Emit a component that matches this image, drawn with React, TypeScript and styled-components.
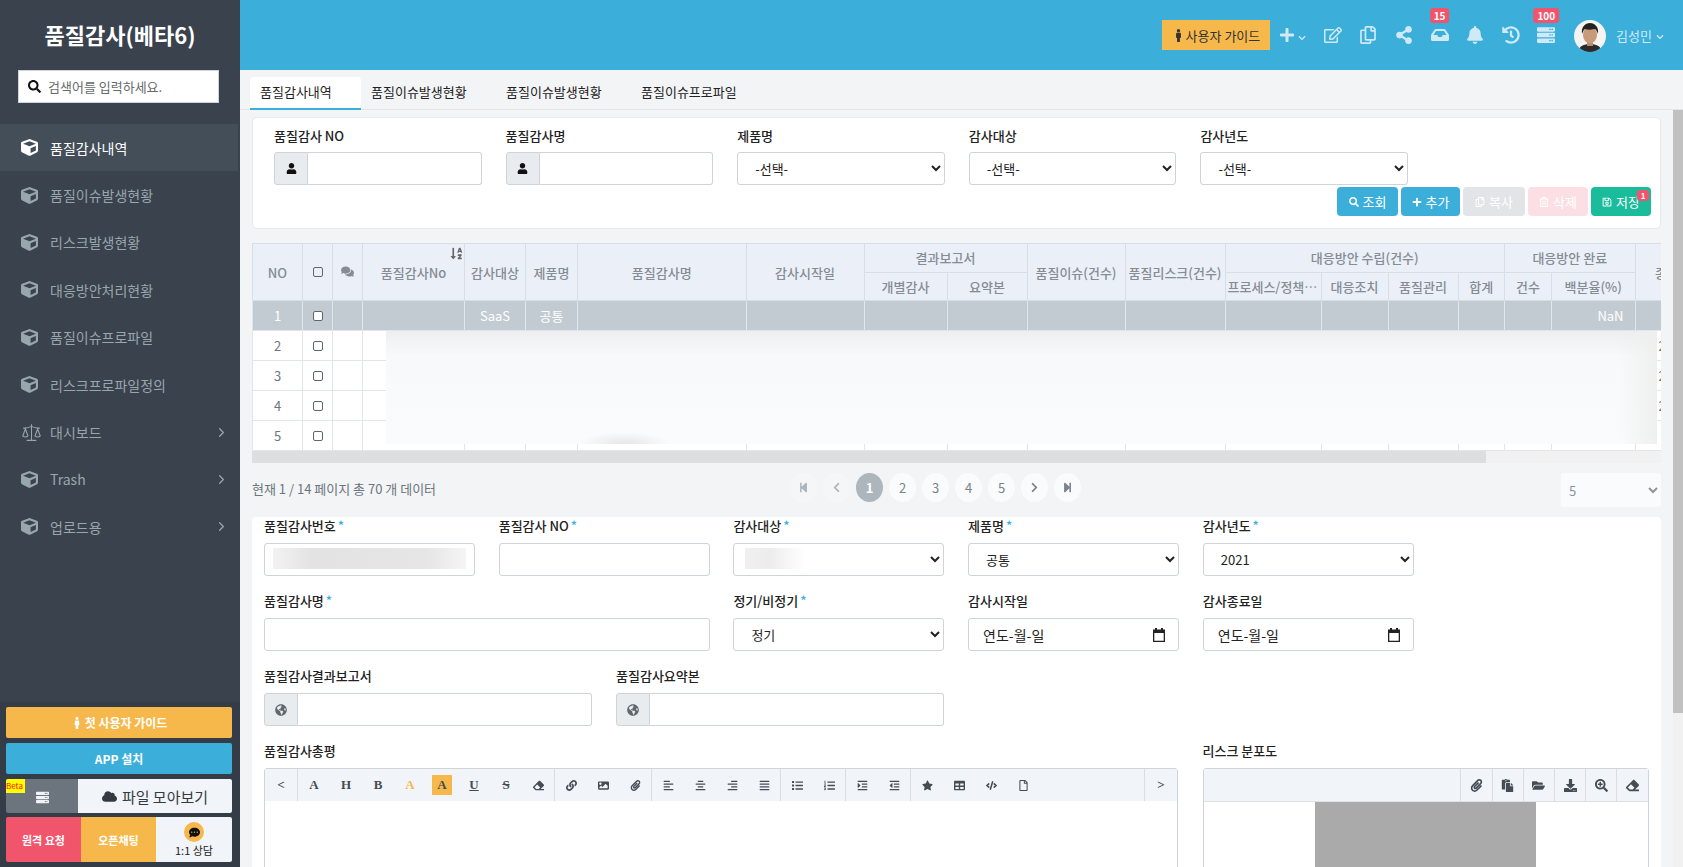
import styled, { createGlobalStyle } from "styled-components";
import { ReactNode } from "react";
import { ChevronRight, Scale } from "lucide-react";
import {
  FaAlignCenter,
  FaAlignJustify,
  FaAlignLeft,
  FaAlignRight,
  FaBell,
  FaChevronDown,
  FaChevronLeft,
  FaChevronRight,
  FaCloud,
  FaCode,
  FaCommentDots,
  FaComments,
  FaCube,
  FaDownload,
  FaEraser,
  FaFolderOpen,
  FaGlobeAmericas,
  FaHistory,
  FaImage,
  FaInbox,
  FaIndent,
  FaLink,
  FaList,
  FaListOl,
  FaMale,
  FaOutdent,
  FaPaperclip,
  FaPaste,
  FaPlus,
  FaRegCopy,
  FaRegEdit,
  FaRegFile,
  FaRegSave,
  FaRegTrashAlt,
  FaSearch,
  FaSearchPlus,
  FaServer,
  FaShareAlt,
  FaSortAlphaDown,
  FaStar,
  FaStepBackward,
  FaStepForward,
  FaTable,
  FaUser,
} from "react-icons/fa";

const GlobalStyle = createGlobalStyle`
  * { box-sizing: border-box; }
  html, body { margin: 0; padding: 0; height: 100%; overflow: hidden; }
  body {
    font-family: "Noto Sans CJK KR", "Noto Sans", sans-serif;
    font-size: 13px;
    color: #333;
    background: #f3f4f6;
  }
  select, input { font-family: inherit; }
`;

const Shell = styled.div`
  display: flex;
  width: 100%;
  height: 100vh;
  overflow: hidden;
`;

/* sidebar */
const Sidebar = styled.aside`
  flex: 0 0 240px;
  display: flex;
  flex-direction: column;
  background: #3a424d;
`;

const Title = styled.h1`
  margin: 0;
  height: 70px;
  line-height: 68px;
  text-align: center;
  color: #fff;
  font-size: 22px;
  font-weight: 700;
`;

const SearchBox = styled.div`
  display: flex;
  align-items: center;
  gap: 7px;
  height: 33px;
  margin: 0 21px 0 18px;
  padding-left: 9px;
  background: #fff;
  border: 1px solid #ced4da;
  color: #676a6c;
  svg {
    color: #111;
    font-size: 13px;
  }
`;

const Menu = styled.nav`
  margin-top: 21px;
`;

const MenuItem = styled.div<{ $active?: boolean }>`
  display: flex;
  align-items: center;
  height: 47.4px;
  margin-right: 2px;
  padding: 0 9px 0 21px;
  font-size: 14px;
  color: ${(p) => (p.$active ? "#fff" : "#98a6ad")};
  background: ${(p) => (p.$active ? "#444e59" : "transparent")};
`;

const MenuIcon = styled.span`
  flex: 0 0 29px;
  display: flex;
  align-items: center;
  font-size: 17px;
`;

const MenuLabel = styled.span`
  flex: 1;
`;

const SideBottom = styled.div`
  margin-top: auto;
  display: flex;
  flex-direction: column;
  gap: 5px;
  padding: 5px 8px 5px 6px;
  background: #343c47;
`;

const WideButton = styled.div<{ $bg: string }>`
  display: flex;
  align-items: center;
  justify-content: center;
  gap: 2px;
  height: 31px;
  border-radius: 2px;
  background: ${(p) => p.$bg};
  color: #fff;
  font-size: 12px;
  font-weight: 700;
`;

const FileRow = styled.div`
  position: relative;
  display: flex;
  height: 34px;
  border-radius: 2px;
  overflow: hidden;
`;

const FileIconCell = styled.div`
  flex: 0 0 72px;
  display: flex;
  align-items: center;
  justify-content: center;
  padding-top: 3px;
  background: #6c757d;
  color: #f1f3f7;
  font-size: 13px;
`;

const BetaTag = styled.span`
  position: absolute;
  left: 0;
  top: 0;
  width: 19px;
  height: 14px;
  background: #ff0;
  color: #f00;
  font-size: 8px;
  line-height: 14px;
`;

const FileCell = styled.div`
  flex: 1;
  display: flex;
  align-items: center;
  justify-content: center;
  gap: 5px;
  background: #f1f4f8;
  color: #343a40;
  font-size: 15px;
`;

const HelpRow = styled.div`
  display: grid;
  grid-template-columns: 75px 75px 76px;
  height: 45px;
  margin-top: -1px;
  border-radius: 2px;
  overflow: hidden;
`;

const HelpCell = styled.div<{ $bg: string }>`
  display: flex;
  align-items: center;
  justify-content: center;
  background: ${(p) => p.$bg};
  color: #fff;
  font-size: 11px;
  font-weight: 700;
`;

const ChatCell = styled.div`
  display: flex;
  flex-direction: column;
  align-items: center;
  justify-content: center;
  background: #f1f4f8;
  color: #222;
  font-size: 11px;
  line-height: 14px;
`;

const ChatBubble = styled.span`
  display: flex;
  align-items: center;
  justify-content: center;
  width: 20px;
  height: 20px;
  margin-bottom: 1px;
  border-radius: 50%;
  background: #f7b84b;
  color: #111;
  font-size: 11px;
`;

/* top bar */
const Main = styled.main`
  flex: 1;
  min-width: 0;
  display: flex;
  flex-direction: column;
`;

const TopBar = styled.header`
  flex: 0 0 70px;
  display: flex;
  align-items: center;
  justify-content: flex-end;
  padding-right: 19px;
  background: #3bafda;
`;

const GuideButton = styled.div`
  display: flex;
  align-items: center;
  justify-content: center;
  gap: 1px;
  width: 108px;
  height: 30px;
  background: #f7b84b;
  color: #333;
  font-size: 13px;
`;

const PlusSlot = styled.div`
  display: flex;
  align-items: center;
  width: 45px;
  padding-left: 9px;
  color: #cfeaf6;
  font-size: 16px;
`;

const SmallChevron = styled(FaChevronDown)`
  margin: 6px 0 0 3px;
  font-size: 8px;
`;

const TopIcon = styled.div`
  position: relative;
  display: flex;
  align-items: center;
  justify-content: center;
  width: 35.6px;
  color: #cfeaf6;
  font-size: 18px;
`;

const TopBadge = styled.span`
  position: absolute;
  top: -18px;
  left: 50%;
  transform: translateX(-50%);
  height: 15px;
  padding: 0 4px;
  border-radius: 3px;
  background: #f1556c;
  color: #fff;
  font-size: 10px;
  font-weight: 700;
  line-height: 15px;
`;

const Avatar = styled.svg`
  width: 32px;
  height: 32px;
  margin: 2px 10px 0 10px;
  border-radius: 50%;
`;

const UserName = styled.div`
  display: flex;
  align-items: center;
  gap: 4px;
  color: #cfeaf6;
  font-size: 13px;
  svg {
    font-size: 8px;
    margin-top: 3px;
  }
`;

/* tabs */
const TabBar = styled.div`
  flex: 0 0 40px;
  display: flex;
  align-items: flex-end;
  padding-left: 10px;
  border-bottom: 1px solid #e3e5e8;
`;

const Tab = styled.div<{ $active?: boolean }>`
  width: ${(p) => (p.$active ? "111px" : "135px")};
  height: 33px;
  margin-bottom: -1px;
  padding-left: 10px;
  line-height: 29px;
  border-radius: 4px 4px 0 0;
  color: #222;
  font-size: 13px;
  background: ${(p) => (p.$active ? "#fff" : "transparent")};
  border-bottom: 2px solid ${(p) => (p.$active ? "#3bafda" : "transparent")};
`;

const Body = styled.div`
  flex: 1;
  min-height: 0;
  display: flex;
`;

const Content = styled.div`
  flex: 1;
  min-width: 0;
  padding: 7px 12px 0;
  overflow: hidden;
`;

const PageRail = styled.div`
  flex: 0 0 10px;
  background: #f1f1f1;
`;

const PageThumb = styled.div`
  height: 603px;
  background: #c1c1c1;
`;

/* search card */
const SearchCard = styled.section`
  height: 112px;
  padding: 9px 22px 0 21px;
  background: #fff;
  border: 1px solid #e7e9ec;
  border-radius: 5px;
`;

const SearchFields = styled.div`
  display: grid;
  grid-template-columns: repeat(5, 207.6px);
  column-gap: 24px;
`;

const Label = styled.label`
  display: block;
  height: 20px;
  margin-bottom: 5px;
  line-height: 18px;
  color: #222;
  font-size: 13px;
  font-weight: 500;
  white-space: nowrap;
`;

const FormLabel = styled(Label)`
  line-height: 16px;
`;

const Required = styled.span`
  margin-left: 2px;
  color: #3bafda;
`;

const InputGroup = styled.div`
  display: flex;
  height: 33px;
`;

const Addon = styled.span`
  flex: 0 0 34px;
  display: flex;
  align-items: center;
  justify-content: center;
  background: #e9ecef;
  border: 1px solid #ced4da;
  border-radius: 3px 0 0 3px;
  color: #111;
  font-size: 11px;
`;

const GlobeIcon = styled(FaGlobeAmericas)`
  color: #5f666d;
  font-size: 12px;
`;

const GroupInput = styled.input`
  flex: 1;
  min-width: 0;
  border: 1px solid #ced4da;
  border-left: 0;
  border-radius: 0 3px 3px 0;
  background: #fff;
`;

const TextInput = styled.input`
  display: block;
  width: 100%;
  height: 33px;
  border: 1px solid #ced4da;
  border-radius: 3px;
  background: #fff;
`;

const Select = styled.select`
  display: block;
  width: 100%;
  height: 33px;
  padding: 0 5px 0 13px;
  border: 1px solid #ced4da;
  border-radius: 3px;
  background: #fff;
  color: #222;
  font-size: 13px;
`;

const DateField = styled.div`
  display: flex;
  align-items: center;
  justify-content: space-between;
  height: 33px;
  padding: 0 13px 0 14px;
  border: 1px solid #ced4da;
  border-radius: 3px;
  color: #222;
  font-size: 14px;
`;

const Actions = styled.div`
  display: flex;
  justify-content: flex-end;
  gap: 3px;
  margin: 2px -13px 0 0;
`;

const ActionButton = styled.div<{ $bg: string; $w: number }>`
  position: relative;
  display: flex;
  align-items: center;
  justify-content: center;
  gap: 4px;
  width: ${(p) => p.$w}px;
  height: 29px;
  border-radius: 4px;
  background: ${(p) => p.$bg};
  color: #fff;
  font-size: 13px;
  svg {
    font-size: 10px;
  }
`;

const SaveBadge = styled.span`
  position: absolute;
  top: 3px;
  right: 2px;
  width: 12px;
  height: 11px;
  border-radius: 3px;
  background: #f1556c;
  font-size: 8px;
  font-weight: 700;
  line-height: 11px;
  text-align: center;
`;

/* grid */
const TableWrap = styled.div`
  position: relative;
  margin-top: 14px;
  overflow: hidden;
`;

const Table = styled.table`
  width: 1458.5px;
  table-layout: fixed;
  border-collapse: collapse;
`;

const Th = styled.th`
  position: relative;
  height: 28.5px;
  padding: 0 2px;
  overflow: hidden;
  background: #ebf0f8;
  border: 1px solid #d8dee7;
  color: #858c93;
  font-size: 13px;
  font-weight: 500;
  white-space: nowrap;
  text-overflow: ellipsis;
`;

const SortIcon = styled(FaSortAlphaDown)`
  position: absolute;
  top: 3px;
  right: 1px;
  font-size: 13px;
  color: #666;
`;

const Tr = styled.tr<{ $selected?: boolean }>`
  background: ${(p) => (p.$selected ? "#c3cbd2" : "#fff")};
  color: ${(p) => (p.$selected ? "#fff" : "#6c757d")};
`;

const Td = styled.td<{ $right?: boolean }>`
  height: 30px;
  padding: 0 ${(p) => (p.$right ? "11px" : "2px")} 0 2px;
  border: 1px solid #e2e5e9;
  text-align: ${(p) => (p.$right ? "right" : "center")};
  font-size: 13px;
  font-weight: 400;
  white-space: nowrap;
  overflow: hidden;
`;

const Check = styled.input.attrs({ type: "checkbox" })`
  appearance: none;
  display: block;
  width: 10px;
  height: 10px;
  margin: 0 auto;
  border: 1px solid #5f666d;
  border-radius: 2px;
  background: #fff;
`;

const HeadCheck = styled(Check)`
  background: transparent;
`;

const BlurPatch = styled.div`
  position: absolute;
  left: 134px;
  top: 88px;
  width: 1271px;
  height: 113px;
  background:
    radial-gradient(ellipse 45px 12px at 239px 113px, #e6e6e6, transparent),
    linear-gradient(to right, transparent 97%, #efefef),
    linear-gradient(to bottom, #eceeef, #f8f9fa 22%, #fafbfc);
`;

const HScroll = styled.div`
  height: 12px;
  background: #f1f1f1;
`;

const HThumb = styled.div`
  width: 87.6%;
  height: 100%;
  background: #dcdee0;
`;

/* pagination */
const PagerRow = styled.div`
  display: grid;
  grid-template-columns: 538px auto 1fr;
  align-items: start;
  height: 54px;
  padding-top: 10px;
`;

const PagerText = styled.div`
  color: #6c757d;
  font-size: 13px;
  line-height: 32px;
`;

const Pager = styled.div`
  display: flex;
  gap: 6px;
`;

const PageButton = styled.div<{ $active?: boolean; $faint?: boolean }>`
  display: flex;
  align-items: center;
  justify-content: center;
  width: 27px;
  height: 29px;
  border-radius: 50%;
  background: ${(p) => (p.$active ? "#adb5bd" : p.$faint ? "#f5f6f8" : "#fafbfc")};
  color: ${(p) => (p.$active ? "#fff" : p.$faint ? "#adb5bd" : "#7b8288")};
  font-size: 13px;
  font-weight: ${(p) => (p.$active ? 700 : 400)};
  svg {
    font-size: 11px;
  }
`;

const PageSize = styled.select`
  justify-self: end;
  width: 100px;
  height: 34px;
  padding-left: 4px;
  border: 0;
  border-radius: 3px;
  background: #fafbfc;
  color: #8d9499;
  font-size: 13px;
`;

/* detail form */
const FormCard = styled.section`
  height: 700px;
  padding: 1px 12px 0;
  background: #fff;
  border-radius: 4px 4px 0 0;
`;

const FormRow = styled.div<{ $columns: string; $gap: string }>`
  display: grid;
  grid-template-columns: ${(p) => p.$columns};
  column-gap: ${(p) => p.$gap};
  margin-bottom: 17px;
`;

const Field = styled.div<{ $span?: number }>`
  position: relative;
  grid-column: span ${(p) => p.$span ?? 1};
  min-width: 0;
`;

const BlurValue = styled.div<{ $left: number; $width: number; $soft?: boolean }>`
  position: absolute;
  left: ${(p) => p.$left}px;
  top: 30px;
  width: ${(p) => p.$width}px;
  height: 21px;
  background: ${(p) =>
    p.$soft
      ? "linear-gradient(to right, #f0f0f0, #ececec 40%, #fff)"
      : "linear-gradient(to right, #f2f2f2, #e3e3e3 20%, #e6e6e6 80%, #f5f5f5)"};
`;

const EditorBox = styled.div`
  border: 1px solid #ced4da;
  border-radius: 3px 3px 0 0;
  height: 300px;
`;

const Toolbar = styled.div`
  display: flex;
  height: 32px;
  background: #f1f4f8;
`;

const ToolGroup = styled.div<{ $grow?: boolean }>`
  display: flex;
  flex: ${(p) => (p.$grow ? 1 : "0 0 auto")};
  border-right: 1px solid #dadee2;
  &:last-child {
    border-right: 0;
  }
`;

const ToolButton = styled.span<{ $on?: boolean; $color?: string }>`
  display: flex;
  align-items: center;
  justify-content: center;
  width: 32px;
  color: ${(p) => p.$color ?? "#444c54"};
  font-family: "Liberation Serif", serif;
  font-size: 13px;
  font-weight: 700;
  svg {
    font-size: 11px;
  }
  ${(p) =>
    p.$on &&
    `
    box-shadow: inset 6px 6px 0 #f1f4f8, inset -6px -6px 0 #f1f4f8;
    background: #f7b84b;
  `}
`;

const RiskToolbar = styled(Toolbar)`
  justify-content: flex-end;
  height: 33px;
  border-bottom: 1px solid #dde1e5;
`;

const RiskTool = styled.span`
  display: flex;
  align-items: center;
  justify-content: center;
  width: 31.2px;
  border-left: 1px solid #dadee2;
  color: #444c54;
  font-size: 13px;
`;

const RiskImage = styled.div`
  width: 221px;
  height: 265px;
  margin: 0 auto;
  background: #aaa;
`;

const menus = [
  { label: "품질감사내역", active: true },
  { label: "품질이슈발생현황" },
  { label: "리스크발생현황" },
  { label: "대응방안처리현황" },
  { label: "품질이슈프로파일" },
  { label: "리스크프로파일정의" },
  { label: "대시보드", icon: "scale", more: true },
  { label: "Trash", more: true },
  { label: "업로드용", more: true },
];

const columnWidths = [50, 30, 30, 102, 61, 52, 168.5, 118, 83, 80, 98, 100, 96, 67, 70, 46.5, 47, 83.5, 76];

const lastCells = ["2021", "2021", "2021", "달성"];

function Tools({ items }: { items: ReactNode[] }) {
  return (
    <>
      {items.map((item, i) => (
        <ToolButton key={i}>{item}</ToolButton>
      ))}
    </>
  );
}

function CalendarIcon() {
  return (
    <svg width="12" height="14" viewBox="0 0 12 14">
      <path d="M2 0h2v1.500h4V0h2v1.500h2V14H0V1.500h2z M1.300 5v7.700h9.400V5z" fill="#222" fillRule="evenodd" />
    </svg>
  );
}

export default function App() {
  return (
    <Shell>
      <GlobalStyle />
      <Sidebar>
        <Title>품질감사(베타6)</Title>
        <SearchBox>
          <FaSearch />
          검색어를 입력하세요.
        </SearchBox>
        <Menu>
          {menus.map((m) => (
            <MenuItem key={m.label} $active={m.active}>
              <MenuIcon>{m.icon === "scale" ? <Scale size={21} strokeWidth={1.2} /> : <FaCube />}</MenuIcon>
              <MenuLabel>{m.label}</MenuLabel>
              {m.more ? <ChevronRight size={15} /> : null}
            </MenuItem>
          ))}
        </Menu>
        <SideBottom>
          <WideButton $bg="#f7b84b">
            <FaMale />첫 사용자 가이드
          </WideButton>
          <WideButton $bg="#3bafda">APP 설치</WideButton>
          <FileRow>
            <FileIconCell>
              <FaServer />
            </FileIconCell>
            <BetaTag>Beta</BetaTag>
            <FileCell>
              <FaCloud />
              파일 모아보기
            </FileCell>
          </FileRow>
          <HelpRow>
            <HelpCell $bg="#f1556c">원격 요청</HelpCell>
            <HelpCell $bg="#f7b84b">오픈채팅</HelpCell>
            <ChatCell>
              <ChatBubble>
                <FaCommentDots />
              </ChatBubble>
              1:1 상담
            </ChatCell>
          </HelpRow>
        </SideBottom>
      </Sidebar>

      <Main>
        <TopBar>
          <GuideButton>
            <FaMale />
            사용자 가이드
          </GuideButton>
          <PlusSlot>
            <FaPlus />
            <SmallChevron />
          </PlusSlot>
          <TopIcon>
            <FaRegEdit />
          </TopIcon>
          <TopIcon>
            <FaRegCopy />
          </TopIcon>
          <TopIcon>
            <FaShareAlt />
          </TopIcon>
          <TopIcon>
            <FaInbox />
            <TopBadge>15</TopBadge>
          </TopIcon>
          <TopIcon>
            <FaBell />
          </TopIcon>
          <TopIcon>
            <FaHistory />
          </TopIcon>
          <TopIcon>
            <FaServer />
            <TopBadge>100</TopBadge>
          </TopIcon>
          <Avatar viewBox="0 0 32 32">
            <rect width="32" height="32" fill="#f4f4f2" />
            <path d="M4 32c1-6 6-8 12-8s11 2 12 8z" fill="#2b2b2e" />
            <rect x="13" y="20" width="6" height="6" fill="#b98a6c" />
            <ellipse cx="16" cy="15" rx="7" ry="8.5" fill="#c79a7a" />
            <path d="M8 14c-1-7 3-11 8-11s9 4 8 11c-1-3-2-5-4-5-3 1-6 1-9 0-2 1-2 3-3 5z" fill="#26221f" />
          </Avatar>
          <UserName>
            김성민
            <FaChevronDown />
          </UserName>
        </TopBar>

        <TabBar>
          <Tab $active>품질감사내역</Tab>
          <Tab>품질이슈발생현황</Tab>
          <Tab>품질이슈발생현황</Tab>
          <Tab>품질이슈프로파일</Tab>
        </TabBar>

        <Body>
          <Content>
            <SearchCard>
              <SearchFields>
                <div>
                  <Label>품질감사 NO</Label>
                  <InputGroup>
                    <Addon>
                      <FaUser />
                    </Addon>
                    <GroupInput />
                  </InputGroup>
                </div>
                <div>
                  <Label>품질감사명</Label>
                  <InputGroup>
                    <Addon>
                      <FaUser />
                    </Addon>
                    <GroupInput />
                  </InputGroup>
                </div>
                <div>
                  <Label>제품명</Label>
                  <Select>
                    <option>-선택-</option>
                  </Select>
                </div>
                <div>
                  <Label>감사대상</Label>
                  <Select>
                    <option>-선택-</option>
                  </Select>
                </div>
                <div>
                  <Label>감사년도</Label>
                  <Select>
                    <option>-선택-</option>
                  </Select>
                </div>
              </SearchFields>
              <Actions>
                <ActionButton $bg="#3bafda" $w={61}>
                  <FaSearch />
                  조회
                </ActionButton>
                <ActionButton $bg="#3bafda" $w={59}>
                  <FaPlus />
                  추가
                </ActionButton>
                <ActionButton $bg="#e2e4e7" $w={62}>
                  <FaRegCopy />
                  복사
                </ActionButton>
                <ActionButton $bg="#fbdfe4" $w={60}>
                  <FaRegTrashAlt />
                  삭제
                </ActionButton>
                <ActionButton $bg="#1abc9c" $w={60}>
                  <FaRegSave />
                  저장
                  <SaveBadge>1</SaveBadge>
                </ActionButton>
              </Actions>
            </SearchCard>

            <TableWrap>
              <Table>
                <colgroup>
                  {columnWidths.map((w, i) => (
                    <col key={i} width={w} />
                  ))}
                </colgroup>
                <thead>
                  <tr>
                    <Th rowSpan={2}>NO</Th>
                    <Th rowSpan={2}>
                      <HeadCheck />
                    </Th>
                    <Th rowSpan={2}>
                      <FaComments />
                    </Th>
                    <Th rowSpan={2}>
                      품질감사No
                      <SortIcon />
                    </Th>
                    <Th rowSpan={2}>감사대상</Th>
                    <Th rowSpan={2}>제품명</Th>
                    <Th rowSpan={2}>품질감사명</Th>
                    <Th rowSpan={2}>감사시작일</Th>
                    <Th colSpan={2}>결과보고서</Th>
                    <Th rowSpan={2}>품질이슈(건수)</Th>
                    <Th rowSpan={2}>품질리스크(건수)</Th>
                    <Th colSpan={4}>대응방안 수립(건수)</Th>
                    <Th colSpan={2}>대응방안 완료</Th>
                    <Th rowSpan={2}>종료일</Th>
                  </tr>
                  <tr>
                    <Th>개별감사</Th>
                    <Th>요약본</Th>
                    <Th>프로세스/정책수립</Th>
                    <Th>대응조치</Th>
                    <Th>품질관리</Th>
                    <Th>합계</Th>
                    <Th>건수</Th>
                    <Th>백분율(%)</Th>
                  </tr>
                </thead>
                <tbody>
                  <Tr $selected>
                    {columnWidths.map((_, i) => (
                      <Td key={i} $right={i === 17}>
                        {i === 0 ? 1 : null}
                        {i === 1 ? <Check /> : null}
                        {i === 4 ? "SaaS" : null}
                        {i === 5 ? "공통" : null}
                        {i === 17 ? "NaN" : null}
                      </Td>
                    ))}
                  </Tr>
                  {lastCells.map((last, row) => (
                    <Tr key={row}>
                      {columnWidths.map((_, i) => (
                        <Td key={i}>
                          {i === 0 ? row + 2 : null}
                          {i === 1 ? <Check /> : null}
                          {i === 18 ? last : null}
                        </Td>
                      ))}
                    </Tr>
                  ))}
                </tbody>
              </Table>
              <BlurPatch />
              <HScroll>
                <HThumb />
              </HScroll>
            </TableWrap>

            <PagerRow>
              <PagerText>현재 1 / 14 페이지 총 70 개 데이터</PagerText>
              <Pager>
                <PageButton $faint>
                  <FaStepBackward />
                </PageButton>
                <PageButton $faint>
                  <FaChevronLeft />
                </PageButton>
                <PageButton $active>1</PageButton>
                <PageButton>2</PageButton>
                <PageButton>3</PageButton>
                <PageButton>4</PageButton>
                <PageButton>5</PageButton>
                <PageButton>
                  <FaChevronRight />
                </PageButton>
                <PageButton>
                  <FaStepForward />
                </PageButton>
              </Pager>
              <PageSize>
                <option>5</option>
              </PageSize>
            </PagerRow>

            <FormCard>
              <FormRow $columns="repeat(5, 211px)" $gap="23.7px">
                <Field>
                  <FormLabel>
                    품질감사번호<Required>*</Required>
                  </FormLabel>
                  <TextInput />
                  <BlurValue $left={9} $width={193} />
                </Field>
                <Field>
                  <FormLabel>
                    품질감사 NO<Required>*</Required>
                  </FormLabel>
                  <TextInput />
                </Field>
                <Field>
                  <FormLabel>
                    감사대상<Required>*</Required>
                  </FormLabel>
                  <Select>
                    <option> </option>
                  </Select>
                  <BlurValue $left={12} $width={60} $soft />
                </Field>
                <Field>
                  <FormLabel>
                    제품명<Required>*</Required>
                  </FormLabel>
                  <Select>
                    <option>공통</option>
                  </Select>
                </Field>
                <Field>
                  <FormLabel>
                    감사년도<Required>*</Required>
                  </FormLabel>
                  <Select>
                    <option>2021</option>
                  </Select>
                </Field>
              </FormRow>

              <FormRow $columns="repeat(5, 211px)" $gap="23.7px">
                <Field $span={2}>
                  <FormLabel>
                    품질감사명<Required>*</Required>
                  </FormLabel>
                  <TextInput />
                </Field>
                <Field>
                  <FormLabel>
                    정기/비정기<Required>*</Required>
                  </FormLabel>
                  <Select>
                    <option>정기</option>
                  </Select>
                </Field>
                <Field>
                  <FormLabel>감사시작일</FormLabel>
                  <DateField>
                    연도-월-일
                    <CalendarIcon />
                  </DateField>
                </Field>
                <Field>
                  <FormLabel>감사종료일</FormLabel>
                  <DateField>
                    연도-월-일
                    <CalendarIcon />
                  </DateField>
                </Field>
              </FormRow>

              <FormRow $columns="328px 328px" $gap="24px">
                <Field>
                  <FormLabel>품질감사결과보고서</FormLabel>
                  <InputGroup>
                    <Addon>
                      <GlobeIcon />
                    </Addon>
                    <GroupInput />
                  </InputGroup>
                </Field>
                <Field>
                  <FormLabel>품질감사요약본</FormLabel>
                  <InputGroup>
                    <Addon>
                      <GlobeIcon />
                    </Addon>
                    <GroupInput />
                  </InputGroup>
                </Field>
              </FormRow>

              <FormRow $columns="914px 446px" $gap="24.5px">
                <Field>
                  <FormLabel>품질감사총평</FormLabel>
                  <EditorBox>
                    <Toolbar>
                      <ToolGroup>
                        <Tools items={["<"]} />
                      </ToolGroup>
                      <ToolGroup>
                        <ToolButton>A</ToolButton>
                        <ToolButton>H</ToolButton>
                        <ToolButton>B</ToolButton>
                        <ToolButton $color="#f7b84b">A</ToolButton>
                        <ToolButton $on>A</ToolButton>
                        <ToolButton>
                          <u>U</u>
                        </ToolButton>
                        <ToolButton>
                          <s>S</s>
                        </ToolButton>
                        <ToolButton>
                          <FaEraser />
                        </ToolButton>
                      </ToolGroup>
                      <ToolGroup>
                        <Tools items={[<FaLink />, <FaImage />, <FaPaperclip />]} />
                      </ToolGroup>
                      <ToolGroup>
                        <Tools items={[<FaAlignLeft />, <FaAlignCenter />, <FaAlignRight />, <FaAlignJustify />]} />
                      </ToolGroup>
                      <ToolGroup>
                        <Tools items={[<FaList />, <FaListOl />]} />
                      </ToolGroup>
                      <ToolGroup>
                        <Tools items={[<FaIndent />, <FaOutdent />]} />
                      </ToolGroup>
                      <ToolGroup $grow>
                        <Tools items={[<FaStar />, <FaTable />, <FaCode />, <FaRegFile />]} />
                      </ToolGroup>
                      <ToolGroup>
                        <Tools items={[">"]} />
                      </ToolGroup>
                    </Toolbar>
                  </EditorBox>
                </Field>
                <Field>
                  <FormLabel>리스크 분포도</FormLabel>
                  <EditorBox>
                    <RiskToolbar>
                      <RiskTool>
                        <FaPaperclip />
                      </RiskTool>
                      <RiskTool>
                        <FaPaste />
                      </RiskTool>
                      <RiskTool>
                        <FaFolderOpen />
                      </RiskTool>
                      <RiskTool>
                        <FaDownload />
                      </RiskTool>
                      <RiskTool>
                        <FaSearchPlus />
                      </RiskTool>
                      <RiskTool>
                        <FaEraser />
                      </RiskTool>
                    </RiskToolbar>
                    <RiskImage />
                  </EditorBox>
                </Field>
              </FormRow>
            </FormCard>
          </Content>
          <PageRail>
            <PageThumb />
          </PageRail>
        </Body>
      </Main>
    </Shell>
  );
}
